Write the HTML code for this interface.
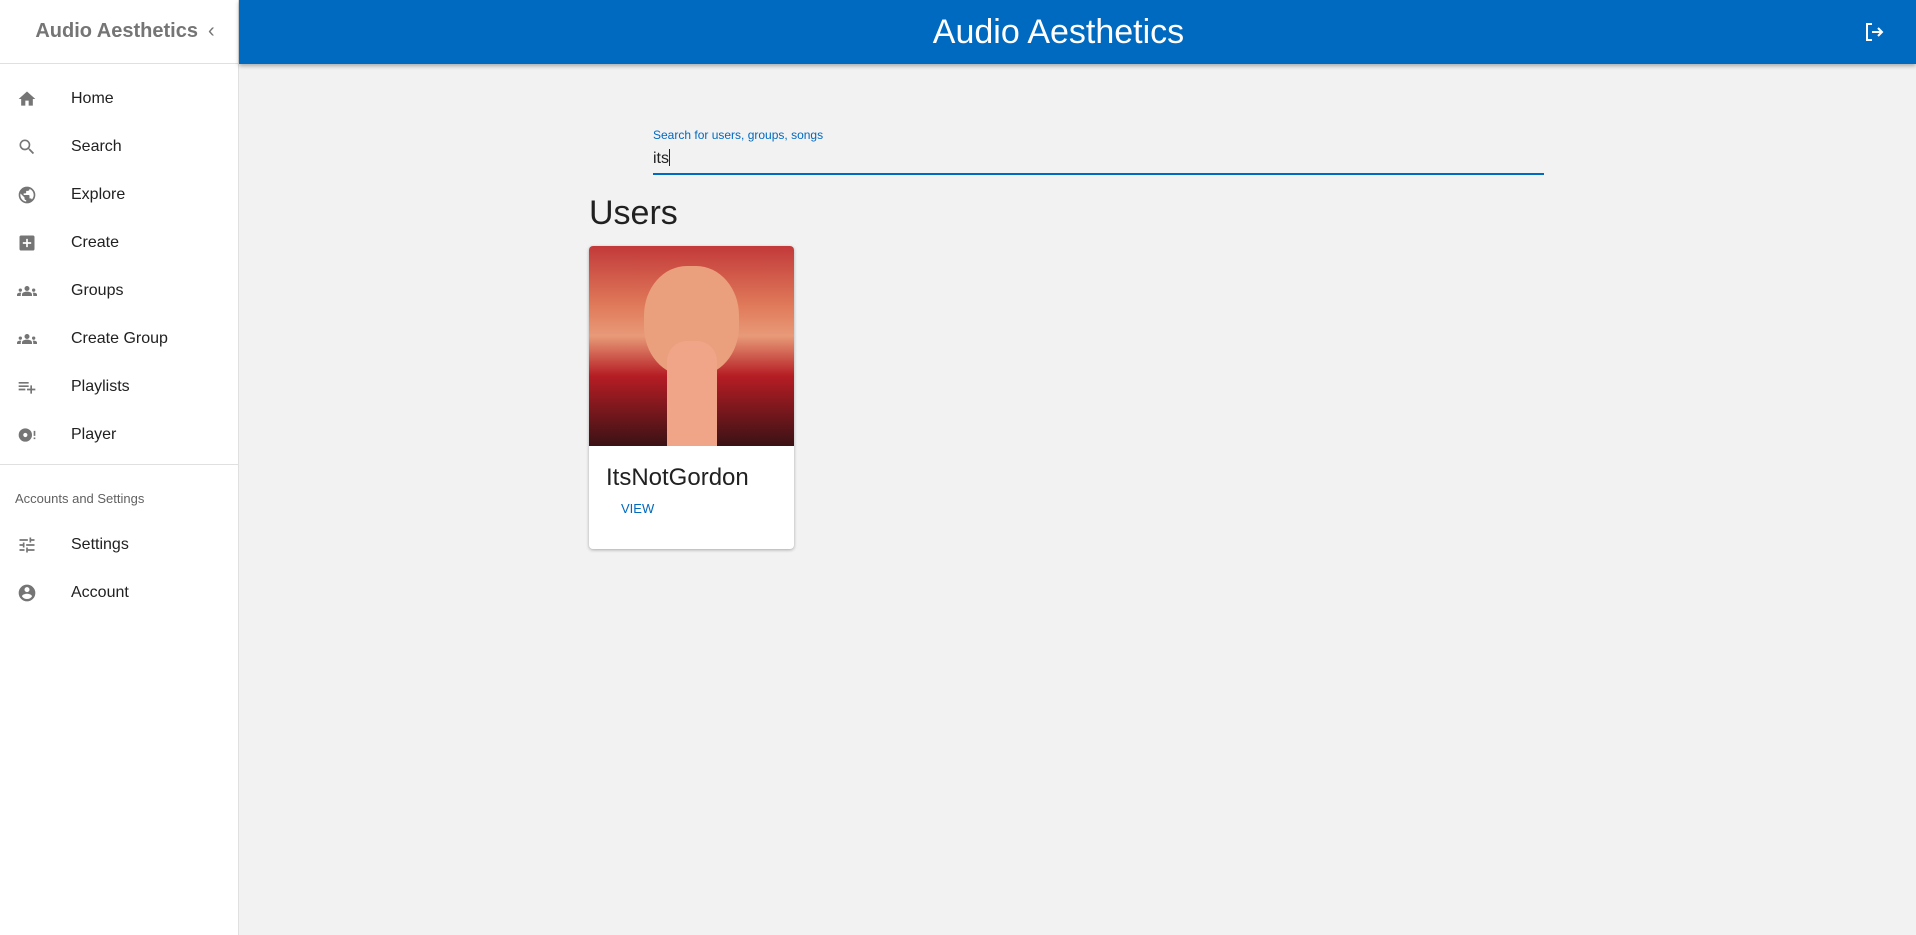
<!DOCTYPE html>
<html><head><meta charset="utf-8"><style>
*{box-sizing:border-box;margin:0;padding:0}
body{width:1916px;height:935px;background:#f2f2f2;font-family:"Liberation Sans",sans-serif;position:relative;overflow:hidden}
.side{position:absolute;left:0;top:0;width:239px;height:935px;background:#fff;border-right:1px solid #e0e0e0}
.st{height:64px;border-bottom:1px solid #e0e0e0;display:flex;align-items:center;justify-content:center;font-weight:bold;font-size:20px;color:#757575;padding-left:12px}
.st span{margin-left:10px;font-weight:normal}
.item{position:absolute;left:0;height:48px;display:flex;align-items:center;font-size:16px;color:#212121}
.item svg{position:absolute;left:17px;width:20px;height:20px;fill:#757575}
.item .t{position:absolute;left:71px;white-space:nowrap}
.hr{position:absolute;left:0;width:238px;border-top:1px solid #e0e0e0}
.hdr{position:absolute;left:239px;top:0;right:0;height:64px;background:#0069c0;box-shadow:0 2px 4px rgba(0,0,0,.3);color:#fff;font-size:34px;text-align:center;line-height:64px;padding-right:38px}
</style></head><body>
<div class="side">
<div class="st">Audio Aesthetics<span>‹</span></div>
<div class="item" style="top:75px"><svg viewBox="0 0 24 24"><path d="M10 20v-6h4v6h5v-8h3L12 3 2 12h3v8z"/></svg><span class="t">Home</span></div>
<div class="item" style="top:123px"><svg viewBox="0 0 24 24"><path d="M15.5 14h-.79l-.28-.27A6.47 6.47 0 0016 9.5 6.5 6.5 0 109.5 16c1.61 0 3.09-.59 4.230-1.57l.27.28v.79l5 4.99L20.49 19l-4.99-5zm-6 0C7.01 14 5 11.99 5 9.5S7.01 5 9.5 5 14 7.01 14 9.5 11.99 14 9.5 14z"/></svg><span class="t">Search</span></div>
<div class="item" style="top:171px"><svg viewBox="0 0 24 24"><path d="M12 2a10 10 0 100 20 10 10 0 000-20zm-1 17.93A8 8 0 014 12c0-.62.08-1.21.21-1.79L9 15v1a2 2 0 002 2v1.93zm6.9-2.54A2 2 0 0016 16h-1v-3a1 1 0 00-1-1H8v-2h2a1 1 0 001-1V7h2a2 2 0 002-2v-.41A8 8 0 0117.9 17.39z"/></svg><span class="t">Explore</span></div>
<div class="item" style="top:219px"><svg viewBox="0 0 24 24"><path d="M19 3H5a2 2 0 00-2 2v14a2 2 0 002 2h14a2 2 0 002-2V5a2 2 0 00-2-2zm-2 10h-4v4h-2v-4H7v-2h4V7h2v4h4v2z"/></svg><span class="t">Create</span></div>
<div class="item" style="top:267px"><svg viewBox="0 0 24 24"><path d="M12 12.75c1.63 0 3.07.39 4.24.9 1.08.48 1.76 1.56 1.76 2.73V18H6v-1.61c0-1.18.68-2.26 1.76-2.73 1.17-.52 2.61-.91 4.24-.91zM4 13a2 2 0 100-4 2 2 0 000 4zm1.13 1.1A6.98 6.98 0 004 14c-.99 0-1.93.21-2.78.58A2 2 0 000 16.43V18h4.5v-1.61c0-.83.23-1.61.63-2.29zM20 13a2 2 0 100-4 2 2 0 000 4zm4 3.43c0-.81-.48-1.53-1.22-1.85A6.950 6.95 0 0020 14c-.39 0-.76.04-1.13.1.4.68.63 1.46.63 2.29V18H24v-1.57zM12 6a3 3 0 110 6 3 3 0 010-6z"/></svg><span class="t">Groups</span></div>
<div class="item" style="top:315px"><svg viewBox="0 0 24 24"><path d="M12 12.75c1.63 0 3.07.39 4.24.9 1.08.48 1.76 1.56 1.76 2.73V18H6v-1.61c0-1.18.68-2.26 1.76-2.73 1.17-.52 2.61-.91 4.24-.91zM4 13a2 2 0 100-4 2 2 0 000 4zm1.13 1.1A6.98 6.98 0 004 14c-.99 0-1.93.21-2.78.58A2 2 0 000 16.43V18h4.5v-1.61c0-.83.23-1.61.63-2.29zM20 13a2 2 0 100-4 2 2 0 000 4zm4 3.43c0-.81-.48-1.53-1.22-1.85A6.95 6.95 0 0020 14c-.39 0-.76.04-1.13.1.4.68.63 1.46.63 2.29V18H24v-1.57zM12 6a3 3 0 110 6 3 3 0 010-6z"/></svg><span class="t">Create Group</span></div>
<div class="item" style="top:363px"><svg viewBox="0 0 24 24"><path d="M14 10H2v2h12v-2zm0-4H2v2h12V6zm4 8v-4h-2v4h-4v2h4v4h2v-4h4v-2h-4zM2 16h8v-2H2v2z"/></svg><span class="t">Playlists</span></div>
<div class="item" style="top:411px"><svg viewBox="0 0 24 24"><path d="M10 4a8 8 0 100 16 8 8 0 000-16zm0 10.5a2.5 2.5 0 110-5 2.5 2.5 0 010 5zM20 7h2v6h-2zm0 8h2v2h-2z"/></svg><span class="t">Player</span></div>
<div class="hr" style="top:464px"></div>
<div style="position:absolute;left:15px;top:491px;font-size:13px;color:#616161">Accounts and Settings</div>
<div class="item" style="top:521px"><svg viewBox="0 0 24 24"><path d="M3 17v2h6v-2H3zM3 5v2h10V5H3zm10 16v-2h8v-2h-8v-2h-2v6h2zM7 9v2H3v2h4v2h2V9H7zm14 4v-2H11v2h10zm-6-4h2V7h4V5h-4V3h-2v6z"/></svg><span class="t">Settings</span></div>
<div class="item" style="top:569px"><svg viewBox="0 0 24 24"><path d="M12 2a10 10 0 100 20 10 10 0 000-20zm0 3a3 3 0 110 6 3 3 0 010-6zm0 14.2a7.2 7.2 0 01-6-3.22c.03-1.99 4-3.08 6-3.08s5.970 1.09 6 3.08a7.2 7.2 0 01-6 3.22z"/></svg><span class="t">Account</span></div>
</div>
<div class="hdr">Audio Aesthetics
<svg viewBox="0 0 24 24" style="position:absolute;right:30px;top:20px;width:24px;height:24px" fill="none" stroke="#fff" stroke-width="2"><path d="M10 4H5v16h5M10 12h10M16 8l4 4-4 4"/></svg></div>
<div style="position:absolute;left:653px;top:128px;font-size:12px;color:#0069c0">Search for users, groups, songs</div>
<div style="position:absolute;left:653px;top:149px;font-size:16px;color:#212121">its<span style="display:inline-block;width:1px;height:17px;background:#212121;vertical-align:-3px"></span></div>
<div style="position:absolute;left:653px;top:173px;width:891px;height:2px;background:#0069c0"></div>
<div style="position:absolute;left:589px;top:194px;font-size:34px;color:#212121">Users</div>
<div style="position:absolute;left:589px;top:246px;width:205px;height:303px;background:#fff;border-radius:4px;box-shadow:0 1px 3px rgba(0,0,0,.3);overflow:hidden">
<div style="height:200px;background:linear-gradient(180deg,#c23a3a 0%,#e07a5a 30%,#e89a78 45%,#b51d24 65%,#3a1215 100%);position:relative">
<div style="position:absolute;left:55px;top:20px;width:95px;height:110px;border-radius:45%;background:#eaa07d"></div>
<div style="position:absolute;left:78px;top:95px;width:50px;height:105px;background:#f0a588;border-radius:20px 20px 0 0"></div>
</div>
<div style="position:absolute;left:17px;top:218px;font-size:24px;color:#212121">ItsNotGordon</div>
<div style="position:absolute;left:32px;top:255px;font-size:13px;color:#0069c0">VIEW</div>
</div>
</body></html>
